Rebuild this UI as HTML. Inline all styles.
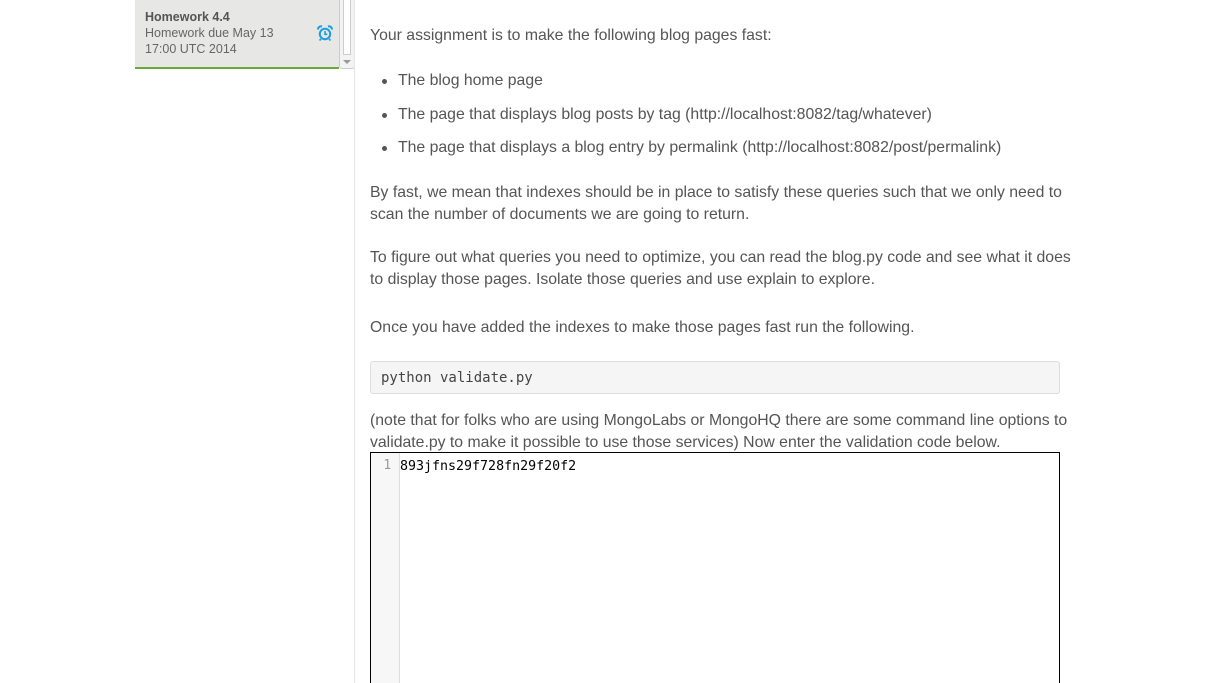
<!DOCTYPE html>
<html><head><meta charset="utf-8"><style>
html,body{margin:0;width:1210px;height:683px;overflow:hidden}
body{background:#fff;font-family:"Liberation Sans",sans-serif;position:relative}
.card{position:absolute;left:135px;top:0;width:204px;height:67px;background:#e7e7e5;border-bottom:2px solid #6aa83a;color:#666;font-size:12.5px;line-height:16px}
.card .t{position:absolute;left:10px;top:9px}
.card b{color:#555}
.sb{position:absolute;left:339px;top:0;width:14px;height:68px;background:#f3f3f3;border:1px solid #ccc;border-top:none;border-radius:0 0 3px 3px}
.sb .th{position:absolute;left:3px;top:0;width:6px;height:54px;background:#fff;border:1px solid #ccc;border-top:none}
.sb .ar{position:absolute;left:3px;top:60px;width:0;height:0;border-left:4px solid transparent;border-right:4px solid transparent;border-top:4px solid #999}
.vline{position:absolute;left:354px;top:0;width:1px;height:683px;background:#e5e5e5}
.c{position:absolute;left:370px;top:0;width:690px;color:#555;font-size:15.8px;line-height:22px}
.c p{margin:0;position:absolute;left:0;width:720px;white-space:nowrap}
.c li{position:absolute;left:28px;white-space:nowrap;list-style:none}
.c li:before{content:"";position:absolute;left:-16px;top:9px;width:5px;height:5px;border-radius:50%;background:#555}
.pre{position:absolute;left:0;top:361px;width:688px;height:31px;border:1px solid #ddd;border-radius:3px;background:#f5f5f5;font-family:"DejaVu Sans Mono",monospace;font-size:14px;line-height:32px;text-indent:10px;color:#444}
.ed{position:absolute;left:0;top:452px;width:688px;height:240px;border:1px solid #000}
.gut{position:absolute;left:0;top:0;width:28px;height:100%;background:#f7f7f7;border-right:1px solid #ddd;color:#999;font-family:"DejaVu Sans Mono",monospace;font-size:13px;text-align:right;line-height:26px}
.code{position:absolute;left:29px;top:0;font-family:"DejaVu Sans Mono",monospace;font-size:13.3px;line-height:28px;color:#000}
</style></head><body>
<div class="card"><div class="t"><b>Homework 4.4</b><br>Homework due May 13<br>17:00 UTC 2014</div>
<svg style="position:absolute;left:182px;top:25px" width="16" height="16" viewBox="0 0 16 16"><circle cx="8" cy="9" r="5.2" fill="none" stroke="#1a9ee0" stroke-width="2"/><path d="M8 6v3.3h2.3" fill="none" stroke="#1a9ee0" stroke-width="1.6"/><path d="M1 4.5a3 3 0 0 1 4-3M15 4.5a3 3 0 0 0-4-3" fill="none" stroke="#1a9ee0" stroke-width="2"/><path d="M4 14l-1.5 1.5M12 14l1.5 1.5" stroke="#1a9ee0" stroke-width="1.6"/></svg>
</div>
<div class="sb"><div class="th"></div><div class="ar"></div></div>
<div class="vline"></div>
<div class="c">
<p style="top:25px">Your assignment is to make the following blog pages fast:</p>
<li style="top:70px">The blog home page</li>
<li style="top:104px">The page that displays blog posts by tag (http://localhost:8082/tag/whatever)</li>
<li style="top:137px">The page that displays a blog entry by permalink (http://localhost:8082/post/permalink)</li>
<p style="top:182px">By fast, we mean that indexes should be in place to satisfy these queries such that we only need to<br>scan the number of documents we are going to return.</p>
<p style="top:247px">To figure out what queries you need to optimize, you can read the blog.py code and see what it does<br>to display those pages. Isolate those queries and use explain to explore.</p>
<p style="top:317px">Once you have added the indexes to make those pages fast run the following.</p>
<div class="pre">python validate.py</div>
<p style="top:410px">(note that for folks who are using MongoLabs or MongoHQ there are some command line options to<br>validate.py to make it possible to use those services) Now enter the validation code below.</p>
<div class="ed"><div class="gut">1&nbsp;</div><div class="code">893jfns29f728fn29f20f2</div></div>
</div>
</body></html>
